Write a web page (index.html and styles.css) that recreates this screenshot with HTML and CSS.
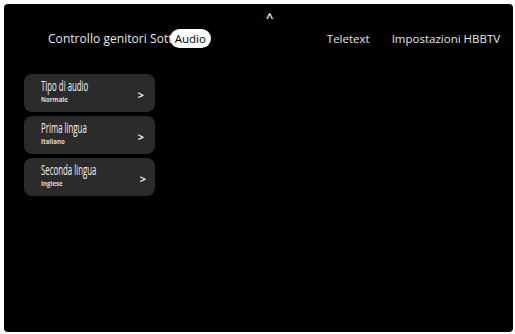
FILE: index.html
```html
<!DOCTYPE html>
<html lang="it">
<head>
  <meta charset="UTF-8" />
  <title>Audio</title>
  <link rel="stylesheet" href="styles.css">
</head>
<body>
  <div class="screen">
    <div class="caret">^</div>
    <!-- Tabs -->
    <nav class="tabs">
      <span class="tab tab-first">Controllo genitori Sott</span>
      <span class="tab active">Audio</span>
      <span class="tab tab-teletext">Teletext</span>
      <span class="tab tab-hbbtv">Impostazioni HBBTV</span>
    </nav>
    <!-- Settings list -->
    <ul class="menu">
      <li class="menu-item">
        <div class="menu-text">
          <div class="menu-title">Tipo di audio</div>
          <div class="menu-value">Normale</div>
        </div>
        <span class="chevron">&gt;</span>
      </li>
      <li class="menu-item">
        <div class="menu-text">
          <div class="menu-title">Prima lingua</div>
          <div class="menu-value">Italiano</div>
        </div>
        <span class="chevron">&gt;</span>
      </li>
      <li class="menu-item">
        <div class="menu-text">
          <div class="menu-title">Seconda lingua</div>
          <div class="menu-value">Inglese</div>
        </div>
        <span class="chevron">&gt;</span>
      </li>
    </ul>
  </div>
</body>
</html>
```

FILE: styles.css
```css
* {
  margin: 0;
  padding: 0;
  box-sizing: border-box;
}
body {
  background-color: #fff;
  font-family: 'Open Sans', sans-serif;
  color: #fff;
}
.screen {
  margin: 4px 2px 2px 4px;
  height: 328px;
  background-color: #000;
  border-radius: 4px;
  padding-top: 5px;
}
.caret {
  margin-left: 262px;
  height: 16px;
  font-size: 13px;
  font-weight: bold;
  line-height: 16px;
  color: #ddd;
}
/* Tabs */
.tabs {
  display: flex;
  align-items: center;
  height: 22px;
  margin-top: 2px;
  padding-left: 44px;
  font-size: 12px;
  color: #e6e6e6;
}
.tab {
  white-space: nowrap;
}
.tab-first {
  letter-spacing: 0.05px;
}
.tab.active {
  background-color: #fff;
  color: #000;
  border-radius: 10px;
  padding: 2px 5px;
  margin-left: -3px;
  font-size: 11.5px;
}
.tab-teletext {
  margin-left: 116px;
  font-size: 11.5px;
}
.tab-hbbtv {
  margin-left: 22px;
  font-size: 11.5px;
}
/* Settings list */
.menu {
  list-style: none;
  margin-top: 25px;
  padding-left: 20px;
  display: flex;
  flex-direction: column;
  gap: 4px;
}
.menu-item {
  width: 131px;
  height: 38px;
  background-color: #2b2b2b;
  border-radius: 8px;
  display: flex;
  align-items: center;
  justify-content: space-between;
  padding: 0 11px 0 17px;
}
.menu-title {
  font-size: 14px;
  line-height: 17px;
  color: #f2f2f2;
  white-space: nowrap;
  transform: scaleX(0.56);
  transform-origin: left center;
  margin-top: -4px;
}
.menu-value {
  font-size: 7.5px;
  font-weight: bold;
  line-height: 11px;
  color: #ddd;
  transform: scaleX(0.82);
  transform-origin: left center;
}
.chevron {
  font-size: 11px;
  font-weight: bold;
  color: #eee;
  margin-top: 2px;
}
```
